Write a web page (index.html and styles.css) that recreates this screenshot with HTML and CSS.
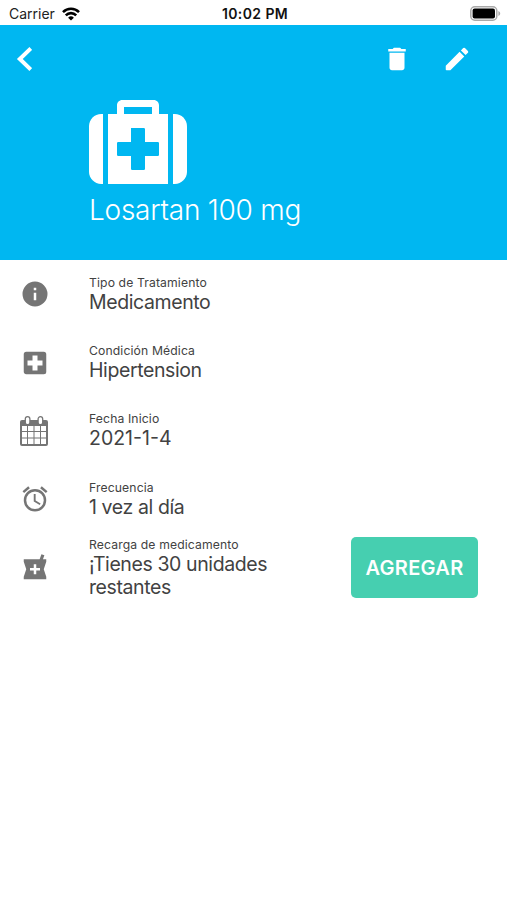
FILE: index.html
```html
<!DOCTYPE html>
<html lang="es">
<head>
    <meta charset="UTF-8">
    <meta name="viewport" content="width=device-width, initial-scale=1.0">
    <title>Losartan 100 mg</title>
    <link rel="stylesheet" href="styles.css">
</head>
<body>
    <div class="status-bar">
        <div class="carrier">
            <span>Carrier</span>
            <svg width="18" height="14" viewBox="0 0 18 14" fill="none" stroke="#000" stroke-width="2.6">
                <path d="M1 5.1a11.4 11.4 0 0 1 16 0"/>
                <path d="M3.8 8.3a7.4 7.4 0 0 1 10.4 0"/>
                <path d="M9 13.6L6.1 10.8a4.1 4.1 0 0 1 5.8 0z" fill="#000" stroke="none"/>
            </svg>
        </div>
        <span class="time">10:02 PM</span>
        <div class="battery">
            <svg width="31" height="15" viewBox="0 0 31 15">
                <rect x=".8" y=".8" width="26" height="13.4" rx="4" fill="#fff" stroke="#a9a9a9" stroke-width="1.5"/>
                <rect x="2.6" y="2.6" width="22.4" height="9.8" rx="2" fill="#000"/>
                <path d="M28.4 5v5c1-.4 1.8-1.3 1.8-2.5s-.8-2.1-1.8-2.5z" fill="#a9a9a9"/>
            </svg>
        </div>
    </div>

    <header class="header">
        <nav class="toolbar">
            <svg width="16" height="24" viewBox="0 0 16 24" fill="none" stroke="#fff" stroke-width="4">
                <path d="M14.8 1.5L3.8 12l11 10.5"/>
            </svg>
            <svg class="trash" width="30" height="30" viewBox="0 0 24 24" fill="#fff">
                <path d="M6 19c0 1.1.9 2 2 2h8c1.1 0 2-.9 2-2V7H6v12zM19 4h-3.500l-1-1h-5l-1 1H5v2h14V4z"/>
            </svg>
            <svg width="30" height="30" viewBox="0 0 24 24" fill="#fff">
                <path d="M3 17.600V20.400q0 .6.6.6H6.400q.3 0 .5-.2L17.810 9.940l-3.750-3.750L3.200 17.100q-.2.200-.2.500zM20.710 7.040a1 1 0 0 0 0-1.410l-2.340-2.340a1 1 0 0 0-1.410 0l-1.830 1.830 3.750 3.750 1.830-1.830z"/>
            </svg>
        </nav>
        <div class="treatment">
            <svg width="98" height="84" viewBox="0 0 98 84" fill="#fff" fill-rule="evenodd">
                <path d="M14 14v70h-1.800C5.500 84 0 78.500 0 71.800V26.200C0 19.500 5.500 14 12.200 14z"/>
                <path d="M19 14h9V5.200C28 2.300 30.300 0 33.200 0h31.600C67.700 0 70 2.300 70 5.200V14h9v70H19zM35 14h28V7H35zM42 28v14H29.200q-1.200 0-1.200 1.200v11.600q0 1.200 1.200 1.200H42v12.800q0 1.200 1.200 1.200h11.600q1.200 0 1.200-1.200V56h12.800q1.200 0 1.200-1.200V43.200q0-1.200-1.200-1.200H56V29.200q0-1.200-1.200-1.200z"/>
                <path d="M84 14h1.800C92.500 14 98 19.500 98 26.200v45.600C98 78.500 92.500 84 85.800 84H84z"/>
            </svg>
            <h1>Losartan 100 mg</h1>
        </div>
    </header>

    <main class="details">
        <div class="row">
            <div class="icon">
                <svg width="30" height="30" viewBox="0 0 24 24">
                    <path d="M12 2a10 10 0 1 0 0 20 10 10 0 0 0 0-20zm1 15h-2v-6h2v6zm0-8h-2V7h2v2z"/>
                </svg>
            </div>
            <div class="text">
                <p class="label">Tipo de Tratamiento</p>
                <p class="value">Medicamento</p>
            </div>
        </div>
        <div class="row">
            <div class="icon">
                <svg width="30" height="30" viewBox="0 0 24 24">
                    <path d="M19 3H5a2 2 0 0 0-2 2v14c0 1.100.9 2 2 2h14a2 2 0 0 0 2-2V5a2 2 0 0 0-2-2zm-1 11h-4v4h-4v-4H6v-4h4V6h4v4h4v4z"/>
                </svg>
            </div>
            <div class="text">
                <p class="label">Condición Médica</p>
                <p class="value">Hipertension</p>
            </div>
        </div>
        <div class="row">
            <div class="icon calendar">
                <svg width="28" height="30" viewBox="0 0 28 30">
                    <path fill-rule="evenodd" d="M2 4h24q2 0 2 2v22q0 2-2 2H2q-2 0-2-2V6q0-2 2-2zM2 10v5h5v-5zm6 0v5h5.500v-5zm6.500 0v5H20v-5zm6.500 0v5h5v-5zM2 16v5.500h5V16zm6 0v5.500h5.500V16zm6.500 0v5.500H20V16zm6.500 0v5.500h5V16zM2 22.500V28h5v-5.500zm6 0V28h5.500v-5.500zm6.500 0V28H20v-5.500zm6.500 0V28h5v-5.500z"/>
                    <rect x="5.300" y=".7" width="4.600" height="8" rx="2.300" fill="#fff" stroke="#757575" stroke-width="1.300"/>
                    <rect x="18.100" y=".7" width="4.600" height="8" rx="2.300" fill="#fff" stroke="#757575" stroke-width="1.300"/>
                </svg>
            </div>
            <div class="text">
                <p class="label">Fecha Inicio</p>
                <p class="value date">2021-1-4</p>
            </div>
        </div>
        <div class="row">
            <div class="icon">
                <svg width="30" height="30" viewBox="0 0 24 24">
                    <path d="M22 5.720l-4.600-3.860-1.290 1.530 4.600 3.860L22 5.720zM7.880 3.390L6.600 1.860 2 5.710l1.290 1.530 4.590-3.850zM12.500 8H11v6l4.750 2.850.75-1.230-4-2.370V8zM12 4a9 9 0 1 0 0 18 9 9 0 0 0 0-18zm0 16a7 7 0 1 1 0-14 7 7 0 0 1 0 14z"/>
                </svg>
            </div>
            <div class="text">
                <p class="label">Frecuencia</p>
                <p class="value">1 vez al día</p>
            </div>
        </div>
        <div class="row">
            <div class="icon">
                <svg width="30" height="30" viewBox="0 0 24 24">
                    <path d="M21 5h-2.640l1.140-3.140L17.150 1l-1.460 4H3v2l2 6-2 6v2h18v-2l-2-6 2-6V5zm-5 9h-3v3h-2v-3H8v-2h3V9h2v3h3v2z"/>
                </svg>
            </div>
            <div class="text">
                <p class="label">Recarga de medicamento</p>
                <p class="value">¡Tienes 30 unidades restantes</p>
            </div>
            <button class="add-button" type="button">AGREGAR</button>
        </div>
    </main>
</body>
</html>
```
FILE: styles.css
```css
body {
    margin: 0;
    background-color: #fff;
    color: #424242;
    font-family: Inter, Roboto, sans-serif;
}

svg {
    display: block;
}

.status-bar {
    display: grid;
    grid-template-columns: 1fr auto 1fr;
    align-items: center;
    height: 25px;
    padding: 2px 6px 0 9px;
    box-sizing: border-box;
    color: #222;
    font-size: 14px;
}

.carrier {
    display: flex;
    align-items: center;
    gap: 7px;
}

.time {
    font-weight: 600;
    color: #111;
    letter-spacing: 0.4px;
}

.battery {
    justify-self: end;
}

.header {
    height: 235px;
    background-color: #00b7f1;
}

.toolbar {
    display: flex;
    align-items: center;
    height: 68px;
    padding: 0 35.5px 0 16px;
}

.trash {
    margin-left: auto;
    margin-right: 30px;
}

.treatment {
    padding: 7px 0 0 89px;
}

h1 {
    margin: 8px 0 0;
    color: #fff;
    font-size: 28px;
    font-weight: 300;
    line-height: 36px;
    letter-spacing: -0.25px;
}

.row {
    display: flex;
    align-items: center;
    height: 68.4px;
    padding-right: 29px;
}

.icon {
    display: flex;
    justify-content: center;
    flex: 0 0 70px;
    fill: #757575;
}

.calendar {
    flex-basis: 68px;
    padding-right: 2px;
}

.text {
    flex: 1;
    margin-left: 19px;
}

.label,
.value {
    margin: 0;
}

.label {
    font-size: 12.2px;
    line-height: 16px;
    letter-spacing: 0.12px;
}

.value {
    max-width: 200px;
    font-size: 19.5px;
    line-height: 23px;
    letter-spacing: -0.4px;
}

.date {
    letter-spacing: 0;
}

.add-button {
    width: 127px;
    height: 61px;
    padding: 0;
    border: none;
    border-radius: 5px;
    background-color: #46cfb0;
    color: #fff;
    font-family: inherit;
    font-size: 20px;
    font-weight: 600;
    letter-spacing: 0.3px;
}
```
